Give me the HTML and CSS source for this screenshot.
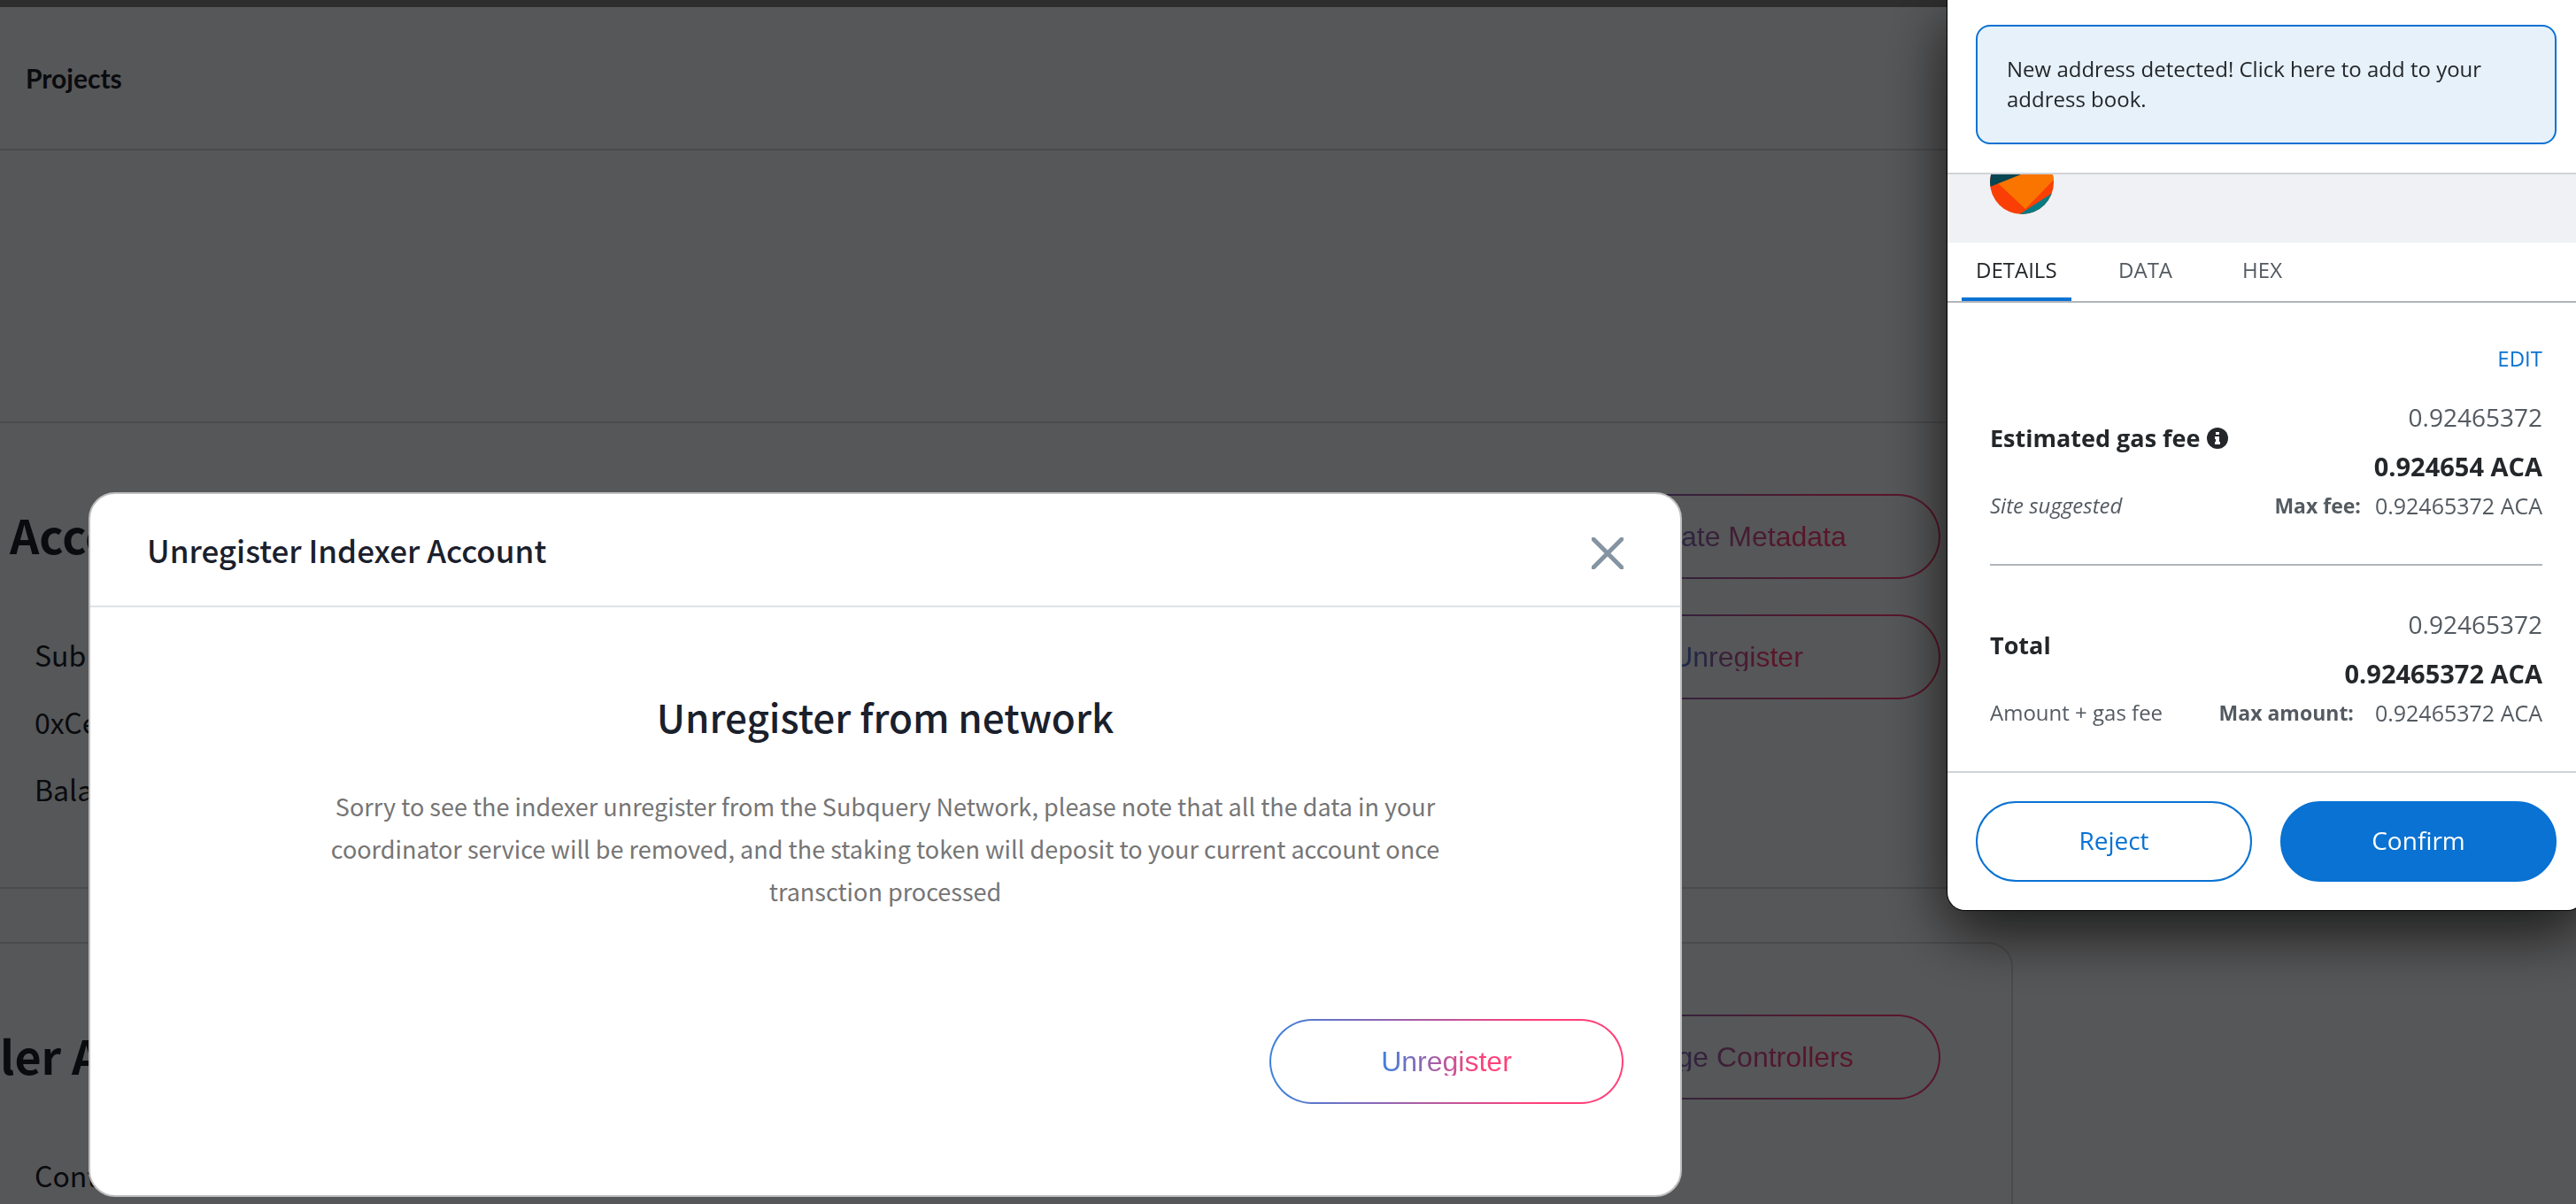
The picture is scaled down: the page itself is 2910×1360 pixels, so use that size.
FILE: index.html
```html
<!DOCTYPE html>
<html lang="en">
<head>
<meta charset="utf-8">
<title>Unregister Indexer Account</title>
<link rel="stylesheet" href="styles.css">
</head>
<body>
<div class="page">
  <header class="site-header">
    <a class="nav-link" href="#projects">Projects</a>
  </header>
  <div class="hero"></div>
  <main class="cards">
    <section class="card">
      <div class="card-info">
        <h2 class="card-title card-title-inset">Acco</h2>
        <ul class="card-list">
          <li>Sub</li>
          <li>0xCe</li>
          <li>Bala</li>
        </ul>
      </div>
      <div class="card-actions">
        <button class="pill pill-wide" type="button"><span class="pill-text">Update Metadata</span></button>
        <button class="pill pill-wide" type="button"><span class="pill-text">Unregister</span></button>
      </div>
    </section>
    <section class="card">
      <div class="card-info">
        <h2 class="card-title">ler A</h2>
        <ul class="card-list">
          <li>Cont</li>
        </ul>
      </div>
      <div class="card-actions">
        <button class="pill pill-wide" type="button"><span class="pill-text">Mange Controllers</span></button>
      </div>
    </section>
  </main>
</div>

<div class="overlay">
  <div class="modal" role="dialog" aria-labelledby="modal-title">
    <div class="modal-header">
      <h1 class="modal-title" id="modal-title">Unregister Indexer Account</h1>
      <button class="modal-close" type="button" aria-label="Close">
        <svg width="36" height="36" viewBox="0 0 36 36" fill="none" stroke="#8594a2" stroke-width="5" stroke-linecap="round"><path d="M2 2L34 34M34 2L2 34"/></svg>
      </button>
    </div>
    <div class="modal-body">
      <h2 class="modal-heading">Unregister from network</h2>
      <p class="modal-text">Sorry to see the indexer unregister from the Subquery Network, please note that all the data in your coordinator service will be removed, and the staking token will deposit to your current account once transction processed</p>
      <div class="modal-actions">
        <button class="pill" type="button"><span class="pill-text">Unregister</span></button>
      </div>
    </div>
  </div>

  <aside class="wallet" aria-label="Wallet confirmation">
    <div class="wallet-notice">
      <a class="notice" href="#address-book">New address detected! Click here to add to your address book.</a>
    </div>
    <div class="wallet-origin">
      <svg class="avatar" width="72" height="45" viewBox="0 27 72 45">
        <defs><clipPath id="disc"><circle cx="36" cy="36" r="36"/></clipPath></defs>
        <g clip-path="url(#disc)">
          <rect width="72" height="72" fill="#f93f05"/>
          <path d="M0 0H72V33L40 66L9 37Z" fill="#fa7500"/>
          <path d="M0 0V41L35 27V0Z" fill="#064552"/>
          <path d="M32 73L72 47V73Z" fill="#077c85"/>
        </g>
      </svg>
    </div>
    <nav class="tabs">
      <button class="tab tab-active" type="button">DETAILS</button>
      <button class="tab" type="button">DATA</button>
      <button class="tab" type="button">HEX</button>
    </nav>
    <div class="fees">
      <div class="fee fee-first">
        <a class="edit" href="#edit">EDIT</a>
        <div class="fee-main">
          <div class="fee-name">Estimated gas fee
            <svg width="24" height="24" viewBox="0 0 24 24"><circle cx="12" cy="12" r="12" fill="#24272a"/><path d="M10 5h4v3h-4zM9 10h5v6h1v3H9v-3h1v-3H9z" fill="#fff"/></svg>
          </div>
          <div class="fee-values"><span>0.92465372</span><strong>0.924654 ACA</strong></div>
        </div>
        <div class="fee-sub"><em>Site suggested</em><span class="fee-max"><b>Max fee:</b><span>0.92465372 ACA</span></span></div>
      </div>
      <div class="fee">
        <div class="fee-main">
          <div class="fee-name">Total</div>
          <div class="fee-values"><span>0.92465372</span><strong>0.92465372 ACA</strong></div>
        </div>
        <div class="fee-sub"><span>Amount + gas fee</span><span class="fee-max fee-max-total"><b>Max amount:</b><span>0.92465372 ACA</span></span></div>
      </div>
    </div>
    <footer class="wallet-footer">
      <button class="btn btn-outline" type="button">Reject</button>
      <button class="btn btn-solid" type="button">Confirm</button>
    </footer>
  </aside>
</div>
</body>
</html>
```
FILE: styles.css
```css
* { box-sizing: border-box; }

html, body { margin: 0; height: 100%; overflow: hidden; }

body {
  background: #f9fbff;
  color: #1a202c;
  font-family: "Noto Sans CJK JP", "Noto Sans", sans-serif;
}

h1, h2, p, ul { margin: 0; padding: 0; }
ul { list-style: none; }
button { font: inherit; color: inherit; cursor: pointer; }
a { color: inherit; text-decoration: none; }

/* Page */
.page { height: 100%; overflow: hidden; border-top: 8px solid #858585; }

.site-header {
  display: flex;
  align-items: center;
  height: 162px;
  padding: 0 29px;
  border-bottom: 2px solid #d6dade;
}

.nav-link { font: 700 30px/36px Lato, sans-serif; }

.hero { height: 306px; }

.cards { display: flex; flex-direction: column; gap: 60px; max-width: 2274px; }

.card {
  display: flex;
  justify-content: space-between;
  padding: 80px 80px 73px 0;
  border: 2px solid #d6dade;
  border-left: 0;
  border-radius: 0 28px 28px 0;
}

.card-title { padding-top: 8px; font-size: 52px; font-weight: 700; line-height: 76px; }
.card-title-inset { padding-left: 11px; }
.card-list { padding: 59px 0 0 39px; font-size: 32px; line-height: 76px; }
.card-actions { display: flex; flex-direction: column; gap: 40px; }

/* Gradient pill button */
.pill {
  display: flex;
  align-items: center;
  justify-content: center;
  width: 400px;
  height: 96px;
  padding: 0;
  border: 2px solid transparent;
  border-radius: 48px;
  background:
    linear-gradient(#fff, #fff) padding-box,
    linear-gradient(90deg, #3b82dd, #ff4079 75%) border-box;
}

.pill-wide {
  width: 458px;
  background:
    linear-gradient(#f9fbff, #f9fbff) padding-box,
    linear-gradient(90deg, #3b82dd, #ff4079 75%) border-box;
}

.pill-text {
  display: block;
  background: linear-gradient(90deg, #3b82dd, #ff4079 75%);
  -webkit-background-clip: text;
  background-clip: text;
  color: transparent;
  font: 32px/32px "Liberation Sans", sans-serif;
}

/* Overlay and modal */
.overlay { position: fixed; inset: 0; overflow: hidden; background: rgba(0, 0, 0, .655); }

.modal {
  position: absolute;
  top: 556px;
  left: 100px;
  width: 1800px;
  border: 2px solid #bfbfbf;
  border-radius: 30px;
  background: #fff;
}

.modal-header {
  display: flex;
  align-items: center;
  justify-content: space-between;
  height: 128px;
  padding: 0 64px;
  border-bottom: 2px solid #dde3e8;
}

.modal-title { font-size: 35px; font-weight: 500; line-height: 48px; }
.modal-close { display: flex; padding: 8px 0 0; border: 0; background: none; }

.modal-body {
  display: flex;
  flex-direction: column;
  align-items: center;
  padding: 91px 64px 103px;
}

.modal-heading { font-size: 44px; font-weight: 500; line-height: 64px; }

.modal-text {
  max-width: 1264px;
  margin-top: 46px;
  color: #757575;
  font-size: 27px;
  line-height: 48px;
  text-align: center;
}

.modal-actions { align-self: flex-end; margin-top: 120px; }

/* Wallet popup */
.wallet {
  position: absolute;
  top: 0;
  right: -10px;
  width: 720px;
  border-radius: 0 0 20px 20px;
  background: #fff;
  box-shadow: 0 0 0 1px #000, 0 24px 70px rgba(0, 0, 0, .75);
  color: #24272a;
  font: 24px/34px "Open Sans", sans-serif;
}

.wallet-notice { padding: 28px 32px 32px; border-bottom: 2px solid #d0d4d8; }

.notice {
  display: block;
  padding: 31px 33px 32px;
  border: 2px solid #0972d3;
  border-radius: 16px;
  background: #e6f1fa;
}

.wallet-origin { height: 77px; padding-left: 48px; background: #f0f1f5; }
.avatar { display: block; }

.tabs { display: flex; gap: 36px; padding: 0 16px; border-bottom: 2px solid #b0b4b9; }

.tab {
  min-width: 96px;
  height: 66px;
  padding: 0 16px;
  border: 0;
  border-bottom: 4px solid transparent;
  background: none;
  color: #535a61;
}

.tab-active { border-bottom-color: #0972d3; color: #24272a; }

.fees { padding: 0 48px; }
.fee { display: flex; flex-direction: column; padding: 39px 0 49px; }
.fee-first { padding-top: 46px; }
.fee-first { border-bottom: 2px solid #b0b5ba; }

.edit { align-self: flex-end; margin-bottom: 22px; color: #0972d3; }

.fee-main { display: flex; justify-content: space-between; font-size: 28px; }

.fee-name {
  display: flex;
  align-items: center;
  align-self: flex-start;
  gap: 8px;
  padding-top: 31px;
  font-size: 27px;
  font-weight: 700;
  line-height: 40px;
}

.fee-values { display: flex; flex-direction: column; color: #535a61; line-height: 55px; text-align: right; }
.fee-values strong { color: #24272a; font-size: 29px; }

.fee-sub { display: flex; justify-content: space-between; color: #535a61; }
.fee-max { display: flex; gap: 16px; font-size: 25px; }
.fee-max-total { gap: 24px; }
.fee-max b { font-size: 23px; }

.wallet-footer { display: flex; gap: 32px; padding: 32px; border-top: 2px solid #d0d3d7; }

.btn {
  flex: 1;
  height: 91px;
  padding: 0 0 3px;
  border: 2px solid #0972d3;
  border-radius: 46px;
  font-size: 28px;
}

.btn-outline { background: #fff; color: #0972d3; }
.btn-solid { background: #0972d3; color: #fff; }
```
